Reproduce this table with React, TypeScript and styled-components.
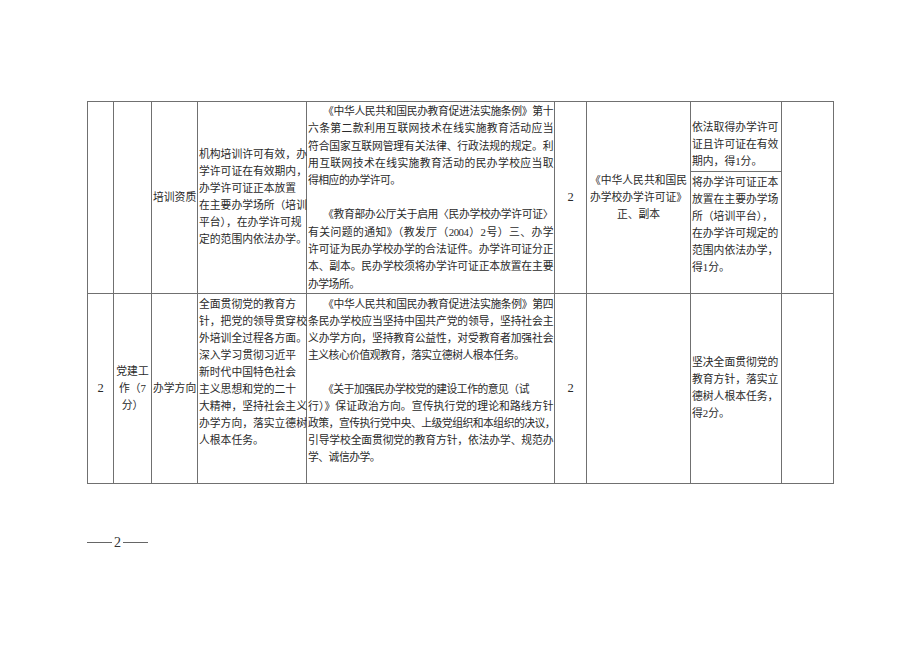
import React from 'react';
import styled, { createGlobalStyle } from 'styled-components';

const GlobalStyle = createGlobalStyle`
  html, body {
    margin: 0;
    padding: 0;
    background: #ffffff;
  }
`;

const columns = [26, 38, 46, 109, 248, 32, 104, 91, 52];

type Para = { lines: string[]; indent?: boolean; fill?: boolean };

const basisPara: Para[] = [
  {
    indent: true,
    fill: true,
    lines: [
      '《中华人民共和国民办教育促进法实施条例》第十',
      '六条第二款利用互联网技术在线实施教育活动应当',
      '符合国家互联网管理有关法律、行政法规的规定。利',
      '用互联网技术在线实施教育活动的民办学校应当取',
      '得相应的办学许可。',
    ],
  },
  {
    indent: true,
    fill: true,
    lines: [
      '《教育部办公厅关于启用〈民办学校办学许可证〉',
      '有关问题的通知》（教发厅（2004）2号）三、办学',
      '许可证为民办学校办学的合法证件。办学许可证分正',
      '本、副本。民办学校须将办学许可证正本放置在主要',
      '办学场所。',
    ],
  },
];

const partyPara: Para[] = [
  {
    indent: true,
    fill: true,
    lines: [
      '《中华人民共和国民办教育促进法实施条例》第四',
      '条民办学校应当坚持中国共产党的领导，坚持社会主',
      '义办学方向，坚持教育公益性，对受教育者加强社会',
      '主义核心价值观教育，落实立德树人根本任务。',
    ],
  },
  {
    indent: true,
    fill: true,
    lines: [
      '《关于加强民办学校党的建设工作的意见（试',
      '行）》保证政治方向。宣传执行党的理论和路线方针',
      '政策，宣传执行党中央、上级党组织和本组织的决议，',
      '引导学校全面贯彻党的教育方针，依法办学、规范办',
      '学、诚信办学。',
    ],
  },
];

const Page = styled.div`
  width: 920px;
  height: 651px;
  box-sizing: border-box;
  padding: 101px 0 0 87px;
  background: #ffffff;
  font-family: "Liberation Serif", "Noto Sans CJK SC", serif;
  color: #2a2a2a;
`;

const Table = styled.table`
  border-collapse: collapse;
  table-layout: fixed;
  width: 746px;
`;

const Col = styled.col<{ $w: number }>`
  width: ${(p) => p.$w}px;
`;

const Row = styled.tr<{ $h: number }>`
  height: ${(p) => p.$h}px;
`;

const Cell = styled.td<{ $align?: string; $valign?: string; $pt?: number; $pb?: number; $num?: boolean }>`
  border: 1px solid #707070;
  padding: ${(p) => p.$pt ?? 0}px 1px ${(p) => p.$pb ?? 0}px 1px;
  text-align: ${(p) => p.$align ?? 'left'};
  vertical-align: ${(p) => p.$valign ?? 'middle'};
  font-size: ${(p) => (p.$num ? 12.5 : 10.8)}px;
  line-height: 17px;
  white-space: nowrap;
  overflow: visible;
`;

const Line = styled.span<{ $fill?: boolean; $indent?: boolean; $tight?: boolean }>`
  display: block;
  white-space: nowrap;
  padding-left: ${(p) => (p.$indent ? 15 : 0)}px;
  letter-spacing: ${(p) => (p.$tight ? -0.5 : 0)}px;
  text-align: ${(p) => (p.$fill ? 'justify' : 'inherit')};
  text-align-last: ${(p) => (p.$fill ? 'justify' : 'auto')};
`;

const Block = styled.div<{ $gap?: number; $lh?: number }>`
  line-height: ${(p) => p.$lh ?? 17}px;
  & + & {
    margin-top: ${(p) => p.$gap ?? 0}px;
  }
`;

const Footer = styled.div`
  display: flex;
  align-items: center;
  gap: 1px;
  margin-top: 51px;
  height: 16px;
`;

const Dash = styled.span`
  width: 25px;
  height: 1px;
  background: #666666;
`;

const PageNo = styled.span`
  font-family: "Liberation Serif", serif;
  font-size: 14px;
  color: #333333;
  padding: 0 1px;
`;

const Lines: React.FC<{ lines: string[] }> = ({ lines }) => (
  <>
    {lines.map((l, i) => (
      <Line key={i}>{l}</Line>
    ))}
  </>
);

const Paragraphs: React.FC<{ paras: Para[]; gap: number; lh: number; pad?: number }> = ({ paras, gap, lh }) => (
  <>
    {paras.map((p, pi) => (
      <Block key={pi} $gap={gap} $lh={lh}>
        {p.lines.map((l, i) => {
          const last = i === p.lines.length - 1;
          const fill = p.fill && !last && !l.endsWith('（试');
          return (
            <Line key={i} $tight $fill={fill} $indent={p.indent && i === 0}>
              {l}
            </Line>
          );
        })}
      </Block>
    ))}
  </>
);

const App: React.FC = () => (
  <Page>
    <GlobalStyle />
    <Table>
      <colgroup>
        {columns.map((w, i) => (
          <Col key={i} $w={w} />
        ))}
      </colgroup>
      <tbody>
        <Row $h={69}>
          <Cell rowSpan={2} />
          <Cell rowSpan={2} />
          <Cell rowSpan={2} $align="center">培训资质</Cell>
          <Cell rowSpan={2}>
            <Lines
              lines={[
                '机构培训许可有效，办',
                '学许可证在有效期内，',
                '办学许可证正本放置',
                '在主要办学场所（培训',
                '平台），在办学许可规',
                '定的范围内依法办学。',
              ]}
            />
          </Cell>
          <Cell rowSpan={2} $valign="top" $pt={1}>
            <Paragraphs paras={basisPara} gap={14} lh={17.3} />
          </Cell>
          <Cell rowSpan={2} $align="center" $num>2</Cell>
          <Cell rowSpan={2} $align="center">
            <Lines lines={['《中华人民共和国民', '办学校办学许可证》', '正、副本']} />
          </Cell>
          <Cell $valign="bottom" $pb={1}>
            <Lines lines={['依法取得办学许可', '证且许可证在有效', '期内，得1分。']} />
          </Cell>
          <Cell rowSpan={2} />
        </Row>
        <Row $h={120}>
          <Cell $valign="top" $pt={2}>
            <Lines
              lines={[
                '将办学许可证正本',
                '放置在主要办学场',
                '所（培训平台），',
                '在办学许可规定的',
                '范围内依法办学，',
                '得1分。',
              ]}
            />
          </Cell>
        </Row>
        <Row $h={190}>
          <Cell $align="center" $num>2</Cell>
          <Cell $align="center">
            <Lines lines={['党建工', '作（7', '分）']} />
          </Cell>
          <Cell $align="center">办学方向</Cell>
          <Cell $valign="top" $pt={2}>
            <Lines
              lines={[
                '全面贯彻党的教育方',
                '针，把党的领导贯穿校',
                '外培训全过程各方面。',
                '深入学习贯彻习近平',
                '新时代中国特色社会',
                '主义思想和党的二十',
                '大精神，坚持社会主义',
                '办学方向，落实立德树',
                '人根本任务。',
              ]}
            />
          </Cell>
          <Cell $valign="top" $pt={2}>
            <Paragraphs paras={partyPara} gap={17} lh={17} />
          </Cell>
          <Cell $align="center" $num>2</Cell>
          <Cell />
          <Cell>
            <Lines lines={['坚决全面贯彻党的', '教育方针，落实立', '德树人根本任务，', '得2分。']} />
          </Cell>
          <Cell />
        </Row>
      </tbody>
    </Table>
    <Footer>
      <Dash />
      <PageNo>2</PageNo>
      <Dash />
    </Footer>
  </Page>
);

export default App;
